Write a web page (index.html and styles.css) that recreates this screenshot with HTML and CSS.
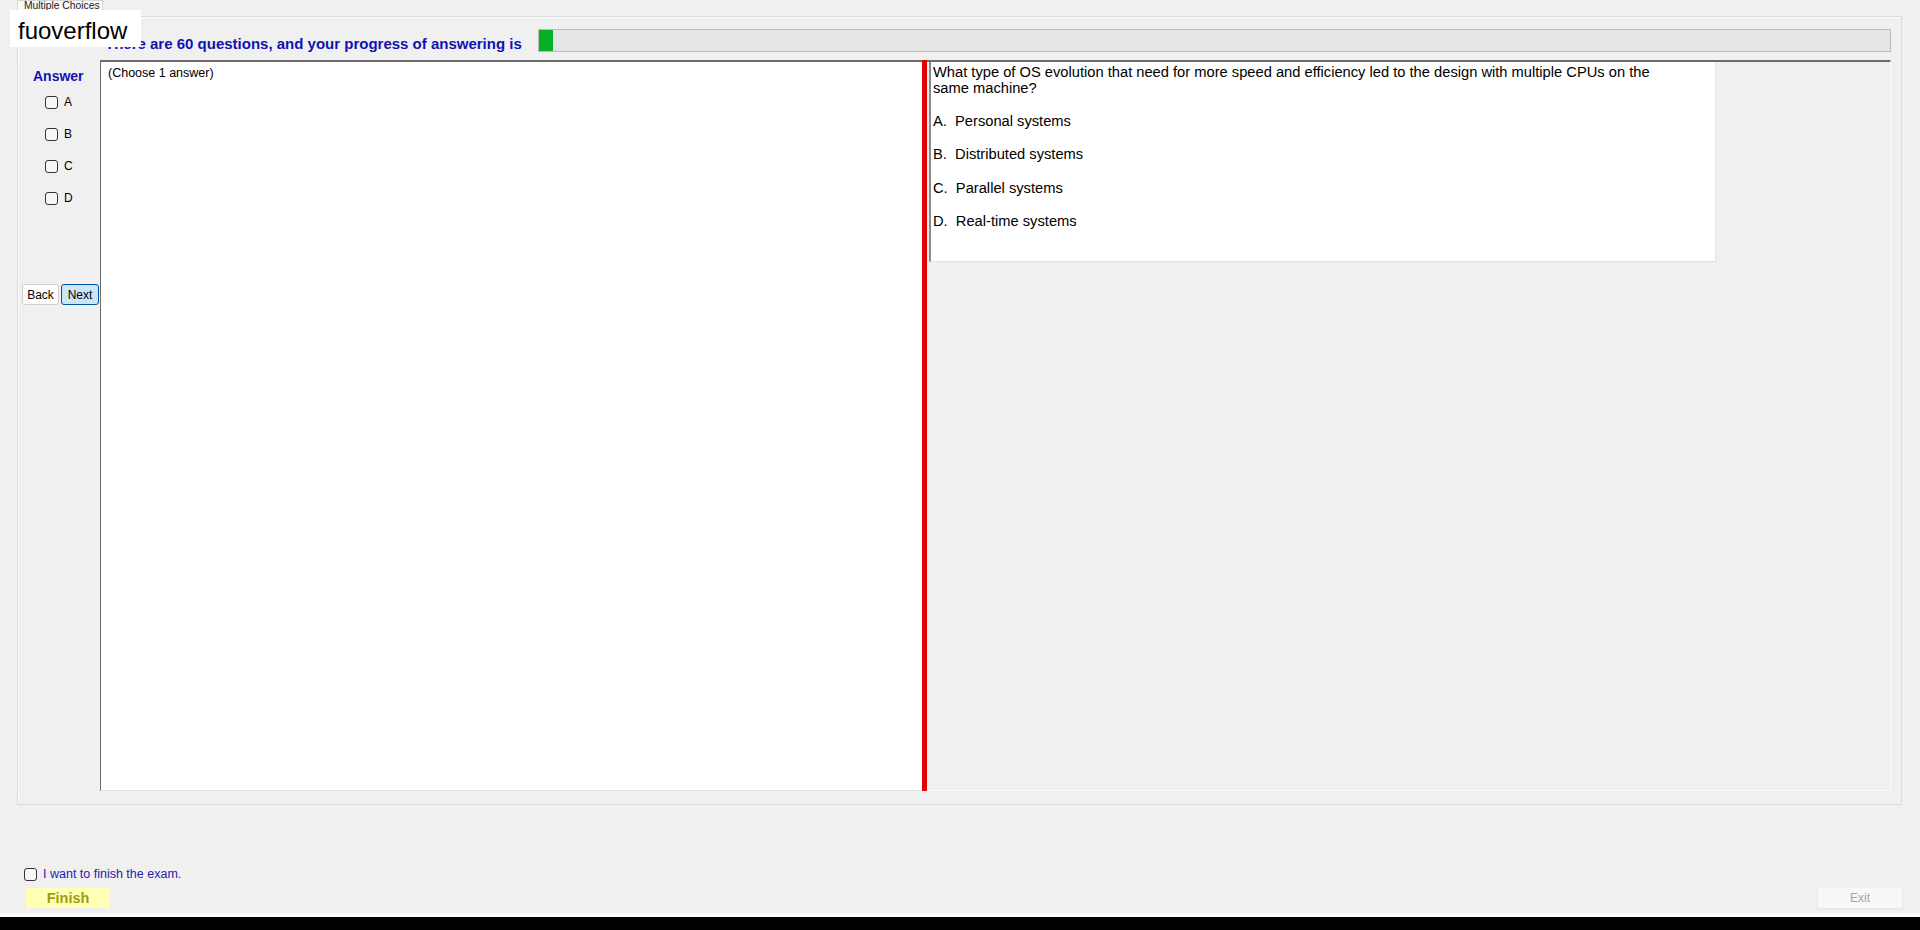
FILE: index.html
```html
<!DOCTYPE html>
<html lang="en">
<head>
  <meta charset="UTF-8" />
  <title>Multiple Choices</title>
  <link rel="stylesheet" href="styles.css">
</head>
<body>
  <div class="window">
    <div class="tab-strip">
      <div class="tab">Multiple Choices</div>
    </div>

    <div class="tab-page">
      <div class="head">
        <span class="title">There are 60 questions, and your progress of answering is</span>
        <div class="progress"><div class="progress-fill" style="width: 14px"></div></div>
      </div>

      <div class="content">
        <aside class="sidebar">
          <div class="answer-label">Answer</div>
          <label class="opt"><input type="checkbox"> A</label>
          <label class="opt"><input type="checkbox"> B</label>
          <label class="opt"><input type="checkbox"> C</label>
          <label class="opt"><input type="checkbox"> D</label>
          <div class="nav">
            <button class="btn">Back</button>
            <button class="btn btn-next">Next</button>
          </div>
        </aside>

        <div class="answer-pane">(Choose 1 answer)</div>
        <div class="splitter"></div>

        <div class="question-pane">
          <div class="question">
            <p class="q-text">What type of OS evolution that need for more speed and efficiency led to the design with multiple CPUs on the same machine?</p>
            <div class="q-opt">A.&nbsp; Personal systems</div>
            <div class="q-opt">B.&nbsp; Distributed systems</div>
            <div class="q-opt">C.&nbsp; Parallel systems</div>
            <div class="q-opt">D.&nbsp; Real-time systems</div>
          </div>
        </div>
      </div>
    </div>

    <div class="footer">
      <label class="finish-check"><input type="checkbox"> I want to finish the exam.</label>
      <div class="footer-row">
        <button class="finish">Finish</button>
        <button class="exit" disabled>Exit</button>
      </div>
    </div>

    <div class="watermark">fuoverflow</div>
  </div>
  <div class="taskbar"></div>
</body>
</html>
```

FILE: styles.css
```css
:root {
  --form-bg: #f0f0f0;
  --label-blue: #1212b4;
  --dark-edge: #6b6b6b;
  --light-edge: #e2e2e2;
}

* {
  box-sizing: border-box;
}

body {
  margin: 0;
  height: 930px;
  background: var(--form-bg);
  font-family: "Liberation Sans", Arial, sans-serif;
  color: #000;
  overflow: hidden;
}

.window {
  position: relative;
  height: 913px;
}

/* tab header */
.tab-strip {
  height: 16px;
  padding-left: 17px;
  overflow: hidden;
}

.tab {
  width: 86px;
  height: 16px;
  background: #f9f9f9;
  border: 1px solid #d9d9d9;
  border-bottom: none;
  font-size: 10.3px;
  line-height: 9px;
  padding-left: 6px;
  color: #222;
  white-space: nowrap;
}

.tab-page {
  margin-left: 17px;
  width: 1885px;
  height: 789px;
  border: 1px solid #dcdcdc;
  box-shadow: inset 1px 1px 0 #fbfbfb;
  padding: 12px 10px 14px 0;
}

.head {
  display: flex;
  align-items: center;
  height: 23px;
}

.title {
  padding-left: 87px;
  width: 520px;
  font-size: 15px;
  font-weight: bold;
  color: var(--label-blue);
  white-space: nowrap;
  padding-top: 6px;
}

.progress {
  flex: 1;
  height: 23px;
  background: #e6e6e6;
  border: 1px solid #bcbcbc;
}

.progress-fill {
  height: 100%;
  background: #06b025;
}

.content {
  display: flex;
  margin-top: 8px;
  height: 731px;
}

/* left column with answer boxes */
.sidebar {
  width: 82px;
  border-left: 1px solid #fafafa;
  display: flex;
  flex-direction: column;
}

.answer-label {
  padding: 8px 0 0 14px;
  font-size: 14px;
  font-weight: bold;
  color: var(--label-blue);
  line-height: 16px;
  height: 26px;
}

.opt {
  display: flex;
  align-items: center;
  height: 32px;
  padding-left: 26px;
  font-size: 12px;
  gap: 6px;
}

input[type="checkbox"] {
  appearance: none;
  margin: 0;
  width: 13px;
  height: 13px;
  border: 1px solid #333;
  border-radius: 3px;
  background: #f7f7f7;
}

.nav {
  display: flex;
  gap: 2px;
  margin-top: 70px;
  margin-left: 3px;
}

.btn {
  height: 21px;
  padding: 0;
  font-family: inherit;
  font-size: 12px;
  border-radius: 3px;
  border: 1px solid #d0d0d0;
  background: #fdfdfd;
  color: #000;
}

.btn:first-child {
  width: 37px;
}

.btn-next {
  width: 38px;
  background: #cce4f7;
  border-color: #005499;
}

.answer-pane {
  width: 822px;
  background: #fff;
  border-top: 2px solid var(--dark-edge);
  border-left: 1px solid var(--dark-edge);
  border-bottom: 1px solid var(--light-edge);
  padding: 4px 7px;
  font-size: 12.5px;
  line-height: 15px;
}

.splitter {
  width: 5px;
  background: #e20000;
}

.question-pane {
  flex: 1;
  border-top: 2px solid var(--dark-edge);
  border-right: 1px solid #fafafa;
  border-bottom: 1px solid #fafafa;
  padding-left: 2px;
}

.question {
  width: 787px;
  height: 200px;
  background: #fff;
  border-left: 2px solid #8a8a8a;
  border-right: 1px solid var(--light-edge);
  border-bottom: 1px solid var(--light-edge);
  padding: 2px 2px 0;
  font-size: 14.7px;
  line-height: 16px;
}

.q-text {
  margin: 0 0 -1px;
  width: 740px;
}

.q-opt {
  margin-top: 17.5px;
}

/* exam finish controls */
.footer {
  padding: 62px 18px 0 24px;
}

.finish-check {
  display: flex;
  align-items: center;
  gap: 6px;
  font-size: 12.5px;
  color: #2a1cb0;
}

.footer-row {
  display: flex;
  justify-content: space-between;
  margin-top: 7px;
}

.finish {
  margin-left: 2px;
  width: 84px;
  height: 20px;
  border: none;
  background: #ffffb4;
  color: #9d9d14;
  font-family: inherit;
  font-size: 14.5px;
  font-weight: bold;
  padding: 0;
}

.exit {
  width: 84px;
  height: 20px;
  border: none;
  background: #f8f8f8;
  box-shadow: 0 1px 2px #e4e4e4;
  color: #a6a6a6;
  font-family: inherit;
  font-size: 12px;
  padding: 0;
}

.watermark {
  position: absolute;
  left: 10px;
  top: 10px;
  width: 131px;
  height: 37px;
  background: #fff;
  font-size: 24px;
  padding: 7px 0 0 8px;
  line-height: 28px;
}

.taskbar {
  height: 17px;
  border-top: 4px solid #fafafa;
  background: #000;
}
```
